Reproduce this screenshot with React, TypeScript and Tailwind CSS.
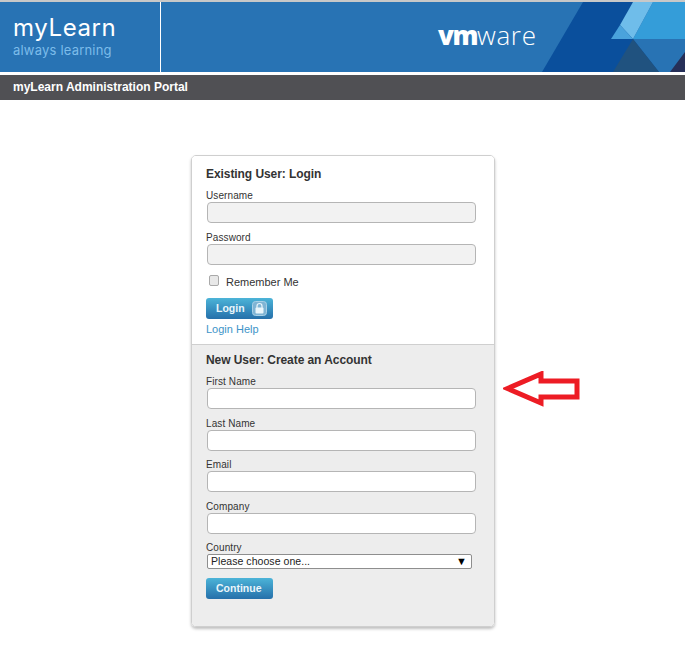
const Field = ({ label, value = "", filled = false, className = "" }: { label: string; value?: string; filled?: boolean; className?: string }) => (
  <div className={className}>
    <label className="block h-[13px] text-[10px] leading-[13px] text-[#333] tracking-[0.1px]">{label}</label>
    <input
      readOnly
      value={value}
      className={`block h-[21px] w-[269px] ml-px rounded-[4px] border border-[#b5b5b5] outline-none ${filled ? "bg-[#f2f2f2]" : "bg-white"}`}
    />
  </div>
);

const BlueButton = ({ children, className = "" }: { children: React.ReactNode; className?: string }) => (
  <button className={`flex h-[21px] w-[67px] items-center rounded-[3px] bg-gradient-to-b from-[#4cb4d8] to-[#2670aa] pl-[10px] text-[10.5px] font-bold text-[#eaf6fb] ${className}`}>
    {children}
  </button>
);

const BannerArt = () => (
  <svg className="absolute right-0 top-0 h-[70px] w-[265px]" viewBox="0 0 265 70">
    <polygon points="163,0 265,0 265,70 122,70" fill="#0a4f9c" />
    <polygon points="233,0 265,0 265,37 213,37" fill="#349dd9" />
    <polygon points="213,0 233,0 213,37 200,23" fill="#6fbdea" />
    <polygon points="200,23 213,37 191,37" fill="#4aa3dc" />
    <polygon points="213,37 265,37 265,70 239,70" fill="#2873b4" />
    <polygon points="213,37 239,70 193,70" fill="#20527f" />
    <polygon points="265,50 265,70 250,70" fill="#262f58" />
  </svg>
);

export default function App() {
  return (
    <div className="min-h-[656px] w-[687px] bg-white font-['Liberation_Sans',Arial,sans-serif]">
      <div className="w-[685px]">
        <div className="h-[2px] bg-[#c8c8c8]" />
        <div className="relative flex h-[70px] overflow-hidden bg-[#2873b4]">
          <BannerArt />
          <div className="relative h-full w-[161px] border-r border-white pl-[13px] pt-[12px] font-['Inter',sans-serif]">
            <div className="text-[24px] leading-[28px] tracking-[0.6px] text-white">myLearn</div>
            <div className="text-[13px] leading-[16px] tracking-[0.2px] text-[#7cbcea]">always learning</div>
          </div>
          <div className="relative ml-[277px] pt-[19px] font-['Open_Sans',sans-serif] text-[26px] leading-[28px] text-white">
            <span className="font-extrabold tracking-[-1.5px]">vm</span>
            <span className="font-light tracking-[0.7px]">ware</span>
          </div>
        </div>
        <div className="h-[3px]" />
        <div className="h-[25px] bg-[#505054] pl-[13px] text-[12px] font-bold leading-[24px] text-white">
          myLearn Administration Portal
        </div>
      </div>

      <div className="ml-[191px] mt-[55px] w-[304px] overflow-hidden rounded-[5px] border border-[#cfcfcf] shadow-[0_2px_3px_rgba(0,0,0,0.25)]">
        <div className="h-[188px] bg-white pl-[14px] pt-[11px]">
          <h2 className="text-[12px] font-bold leading-[14px] tracking-[-0.07px] text-[#333]">Existing User: Login</h2>
          <Field className="mt-[8px]" label="Username" filled />
          <Field className="mt-[8px]" label="Password" filled />
          <div className="mt-[9px] flex h-[14px] items-center">
            <span className="ml-[3px] -mt-[2px] h-[11px] w-[10px] rounded-[2px] border border-[#a9a9a9] bg-[#e8e8e8]" />
            <span className="ml-[7px] mt-[2px] text-[11px] text-[#333]">Remember Me</span>
          </div>
          <BlueButton className="mt-[10px]">
            Login
            <svg className="ml-[7px] h-[15px] w-[15px]" viewBox="0 0 15 15">
              <rect x="0.5" y="0.5" width="14" height="14" rx="3" fill="#7fb4d4" stroke="#a9d0e6" />
              <rect x="3.5" y="6.5" width="8" height="6" rx="1" fill="#eaf6fb" />
              <path d="M5 7V5a2.5 2.5 0 0 1 5 0v2" fill="none" stroke="#eaf6fb" strokeWidth="1.2" />
            </svg>
          </BlueButton>
          <a className="mt-[3px] block text-[11px] leading-[14px] text-[#3d94c8]">Login Help</a>
        </div>

        <div className="h-[282px] border-t border-[#cfcfcf] bg-[#ededed] pl-[14px] pt-[8px]">
          <h2 className="text-[12px] font-bold leading-[14px] tracking-[-0.07px] text-[#333]">New User: Create an Account</h2>
          <Field className="mt-[8px]" label="First Name" />
          <Field className="mt-[8px]" label="Last Name" />
          <Field className="mt-[7px]" label="Email" />
          <Field className="mt-[8px]" label="Company" />
          <div className="mt-[7px]">
            <div className="h-[13px] text-[10px] leading-[13px] tracking-[0.1px] text-[#333]">Country</div>
            <div className="ml-px flex h-[15px] w-[265px] items-center justify-between rounded-[2px] border border-[#8e8e8e] bg-white pl-[3px] pr-[4px] text-[10.5px] tracking-[0.05px] text-[#222]">
              <span>Please choose one...</span>
              <span className="text-[11px] text-black">▼</span>
            </div>
          </div>
          <BlueButton className="mt-[9px]">Continue</BlueButton>
        </div>
      </div>

      <svg className="absolute left-[503px] top-[371px] h-[36px] w-[78px]" viewBox="0 0 78 36">
        <path d="M4.5 17.5 L38 3 V10 H74 V26 H38 V32 Z" fill="none" stroke="#ed1c24" strokeWidth="5" />
      </svg>
    </div>
  );
}
